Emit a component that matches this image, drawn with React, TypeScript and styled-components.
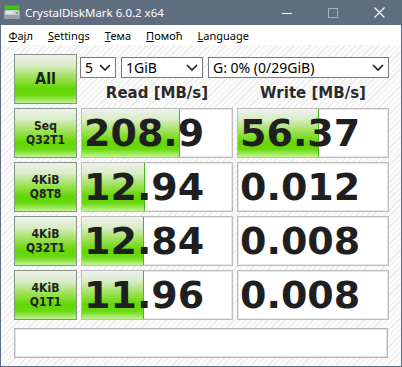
import { Fragment } from 'react';
import styled, { createGlobalStyle } from 'styled-components';

const GlobalStyle = createGlobalStyle`
  html, body {
    margin: 0;
    padding: 0;
    background: #fff;
  }
`;

const BAR = `linear-gradient(
  to bottom,
  #eff1ee 0%,
  #d8ecc6 22%,
  #a2e25c 45%,
  #62d603 70%,
  #6cd912 84%,
  #c2f393 100%
)`;

const Window = styled.div`
  width: 402px;
  height: 367px;
  box-sizing: border-box;
  border: 1px solid #5f6d80;
  border-top: none;
  display: flex;
  flex-direction: column;
  font-family: 'Noto Sans', 'Liberation Sans', sans-serif;
`;

const TitleBar = styled.div`
  height: 25px;
  margin: 0 -1px;
  background: #5f6d80;
  color: #fff;
  display: flex;
  align-items: center;
  font-size: 11.5px;
`;

const TitleIcon = styled.svg`
  margin: 0 5px 0 4px;
  flex-shrink: 0;
`;

const TitleText = styled.span`
  flex: 1;
  white-space: nowrap;
`;

const CtrlButton = styled.div<{ $dim?: boolean }>`
  width: 46px;
  height: 25px;
  display: flex;
  align-items: center;
  justify-content: center;
  opacity: ${(p) => (p.$dim ? 0.45 : 1)};
`;

const MenuBar = styled.div`
  height: 20px;
  background: #fff;
  display: flex;
  align-items: center;
  font-size: 11px;
  color: #000;
`;

const MenuItem = styled.span`
  padding: 0 7.5px;
  u {
    text-underline-offset: 1px;
  }
`;

const Content = styled.div`
  flex: 1;
  padding: 9px 13px 0 13px;
  background-color: #fafafa;
  background-image: repeating-linear-gradient(
    135deg,
    #fbfbfb 0px,
    #fbfbfb 3px,
    #ececec 3px,
    #ececec 4px
  );
`;

const Grid = styled.div`
  display: grid;
  grid-template-columns: 63px 152px 152px;
  grid-template-rows: 24px 22px repeat(4, 50px);
  column-gap: 4px;
  row-gap: 4px;
`;

const TestButton = styled.div<{ $big?: boolean; $tall?: boolean }>`
  grid-row: ${(p) => (p.$tall ? 'span 2' : 'auto')};
  box-sizing: border-box;
  border: 1px solid #859585;
  background: ${BAR};
  display: flex;
  flex-direction: column;
  align-items: center;
  justify-content: center;
  font-family: 'DejaVu Sans Condensed', 'DejaVu Sans', sans-serif;
  font-weight: bold;
  font-size: ${(p) => (p.$big ? '16px' : '12px')};
  line-height: ${(p) => (p.$big ? '18px' : '14px')};
  color: #222;
  text-align: center;
`;

const Controls = styled.div`
  grid-column: 2 / span 2;
  align-self: end;
  display: flex;
  gap: 5px;
  margin-left: -1px;
`;

const Combo = styled.div<{ $w: number }>`
  width: ${(p) => p.$w}px;
  height: 21px;
  box-sizing: border-box;
  border: 1px solid #7a7a7a;
  background: #fff;
  display: flex;
  align-items: center;
  justify-content: space-between;
  padding: 0 4px 0 4px;
  font-size: 14px;
  color: #000;
  white-space: nowrap;
`;

const Header = styled.div`
  font-family: 'DejaVu Sans', sans-serif;
  font-weight: bold;
  font-size: 15px;
  line-height: 22px;
  color: #2b2b2b;
  text-align: center;
`;

const Cell = styled.div`
  position: relative;
  box-sizing: border-box;
  border: 1px solid #bcbcbc;
  box-shadow: inset 0 0 0 1px #e6e6e6;
  background: #fff;
  overflow: hidden;
  display: flex;
  align-items: center;
`;

const Meter = styled.div`
  position: absolute;
  left: 0;
  top: 0;
  bottom: 0;
  background: ${BAR};
  border-right: 1px solid #4cb818;
`;

const Value = styled.span`
  position: relative;
  padding-left: 2px;
  font-family: 'DejaVu Sans', sans-serif;
  font-weight: bold;
  font-size: 38px;
  line-height: 1;
  color: #1f1f1f;
`;

const Comment = styled.div`
  margin-top: 8px;
  width: 374px;
  height: 30px;
  box-sizing: border-box;
  border: 1px solid #b4b4b4;
  box-shadow: inset 0 0 0 1px #e4e4e4;
  background: #fff;
`;

const Chevron = () => (
  <svg width="12" height="7" viewBox="0 0 12 7">
    <polyline points="1,1 6,6 11,1" fill="none" stroke="#1a1a1a" strokeWidth="1.6" />
  </svg>
);

const rows = [
  { label: ['Seq', 'Q32T1'], read: '208.9', write: '56.37' },
  { label: ['4KiB', 'Q8T8'], read: '12.94', write: '0.012' },
  { label: ['4KiB', 'Q32T1'], read: '12.84', write: '0.008' },
  { label: ['4KiB', 'Q1T1'], read: '11.96', write: '0.008' },
];

// log scale meter, 150px inner width
const meterWidth = (v: string) => {
  const n = parseFloat(v);
  const f = Math.log10(n * 10) / 5.15;
  return Math.max(0, Math.min(1, f)) * 150;
};

const Result = ({ value }: { value: string }) => {
  const w = meterWidth(value);
  return (
    <Cell>
      {w > 0 && <Meter style={{ width: w }} />}
      <Value>{value}</Value>
    </Cell>
  );
};

const App = () => {
  return (
    <>
      <GlobalStyle />
      <Window>
        <TitleBar>
          <TitleIcon width="16" height="15" viewBox="0 0 16 15">
            <rect x="0.5" y="0.5" width="15" height="4" rx="1" fill="#3fc21a" />
            <rect x="0.5" y="5" width="15" height="9" rx="1" fill="#c9ccd0" />
            <rect x="0.5" y="10" width="15" height="4" fill="#9aa0a6" />
            <rect x="2" y="6.5" width="7" height="2" fill="#eef0f2" />
            <rect x="12" y="7" width="2" height="2" fill="#3fc21a" />
          </TitleIcon>
          <TitleText>CrystalDiskMark 6.0.2 x64</TitleText>
          <CtrlButton>
            <svg width="10" height="10" viewBox="0 0 10 10">
              <line x1="0" y1="5.5" x2="10" y2="5.5" stroke="#fff" strokeWidth="1" />
            </svg>
          </CtrlButton>
          <CtrlButton $dim>
            <svg width="10" height="10" viewBox="0 0 10 10">
              <rect x="0.5" y="0.5" width="9" height="9" fill="none" stroke="#fff" strokeWidth="1" />
            </svg>
          </CtrlButton>
          <CtrlButton>
            <svg width="11" height="11" viewBox="0 0 11 11">
              <path d="M0.5 0.5 L10.5 10.5 M10.5 0.5 L0.5 10.5" stroke="#fff" strokeWidth="1.1" />
            </svg>
          </CtrlButton>
        </TitleBar>
        <MenuBar>
          <MenuItem><u>Ф</u>ајл</MenuItem>
          <MenuItem><u>S</u>ettings</MenuItem>
          <MenuItem><u>Т</u>ема</MenuItem>
          <MenuItem><u>П</u>омоћ</MenuItem>
          <MenuItem><u>L</u>anguage</MenuItem>
        </MenuBar>
        <Content>
          <Grid>
            <TestButton $big $tall>All</TestButton>
            <Controls>
              <Combo $w={36}>5<Chevron /></Combo>
              <Combo $w={82}>1GiB<Chevron /></Combo>
              <Combo $w={181}>G: 0% (0/29GiB)<Chevron /></Combo>
            </Controls>
            <Header>Read [MB/s]</Header>
            <Header>Write [MB/s]</Header>
            {rows.map((r) => (
              <Fragment key={r.label.join(' ')}>
                <TestButton>
                  <span>{r.label[0]}</span>
                  <span>{r.label[1]}</span>
                </TestButton>
                <Result value={r.read} />
                <Result value={r.write} />
              </Fragment>
            ))}
          </Grid>
          <Comment />
        </Content>
      </Window>
    </>
  );
};

export default App;
